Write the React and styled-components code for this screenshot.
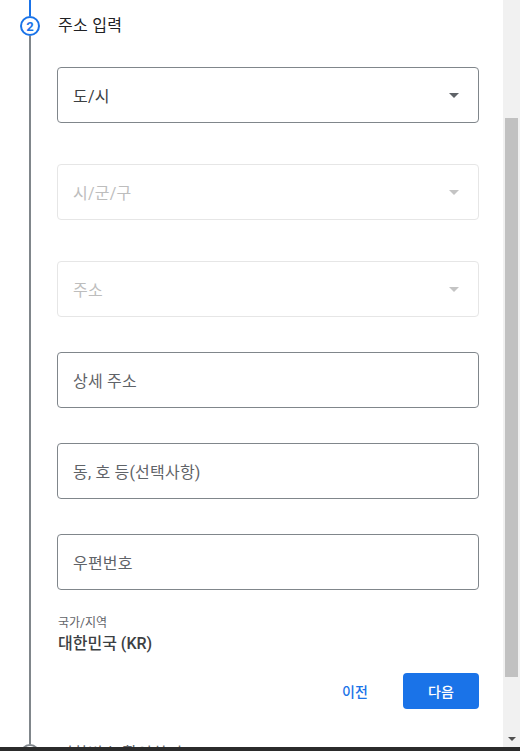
import React from "react";
import styled, { createGlobalStyle } from "styled-components";

const GlobalStyle = createGlobalStyle`
  html, body {
    margin: 0;
    padding: 0;
    background: #ffffff;
  }
  body {
    font-family: Roboto, "Noto Sans CJK KR", sans-serif;
    color: #202124;
  }
`;

const fields = [
  { label: "도/시", select: true, gap: 41 },
  { label: "시/군/구", select: true, disabled: true, gap: 41 },
  { label: "주소", select: true, disabled: true, gap: 35 },
  { label: "상세 주소", gap: 35 },
  { label: "동, 호 등(선택사항)", gap: 35 },
  { label: "우편번호", gap: 0 },
];

const ArrowIcon = ({ disabled }) => (
  <svg width="10" height="5" viewBox="0 0 10 5">
    <path d="M0 0h10L5 5z" fill={disabled ? "#c4c4c4" : "#5f6368"} />
  </svg>
);

export default function App() {
  return (
    <>
      <GlobalStyle />
      <Frame>
        <Window>
          <Content>
            <Step>
              <Rail>
                <Segment $active $height={16} />
                <StepCircle $active>2</StepCircle>
                <Segment $grow />
              </Rail>
              <StepBody>
                <StepTitle>주소 입력</StepTitle>
                <Fields>
                  {fields.map((f) => (
                    <Field
                      key={f.label}
                      $disabled={f.disabled}
                      $gap={f.gap}
                    >
                      <FieldText $disabled={f.disabled} $select={f.select}>
                        {f.label}
                      </FieldText>
                      {f.select && <ArrowIcon disabled={f.disabled} />}
                    </Field>
                  ))}
                </Fields>
                <Country>
                  <CountryLabel>국가/지역</CountryLabel>
                  <CountryValue>대한민국 (KR)</CountryValue>
                </Country>
                <Actions>
                  <TextButton>이전</TextButton>
                  <PrimaryButton>다음</PrimaryButton>
                </Actions>
              </StepBody>
            </Step>
            <Step>
              <Rail>
                <StepCircle>3</StepCircle>
              </Rail>
              <StepBody $next>
                <StepTitle $muted>전화번호 확인하기</StepTitle>
              </StepBody>
            </Step>
          </Content>
          <Scrollbar>
            <Thumb />
            <ScrollArrow>
              <svg width="8" height="4" viewBox="0 0 8 4">
                <path d="M0 0h8L4 4z" fill="#505050" />
              </svg>
            </ScrollArrow>
          </Scrollbar>
        </Window>
        <BottomEdge />
      </Frame>
    </>
  );
}

const Frame = styled.div`
  width: 520px;
  height: 751px;
  display: flex;
  flex-direction: column;
  overflow: hidden;
`;

const Window = styled.div`
  flex: 1;
  min-height: 0;
  display: flex;
  overflow: hidden;
`;

const Content = styled.div`
  flex: 1;
  display: flex;
  flex-direction: column;
  padding-right: 24px;
`;

const Step = styled.div`
  display: flex;
`;

const Rail = styled.div`
  width: 54px;
  padding-left: 3px;
  display: flex;
  flex-direction: column;
  align-items: center;
  flex-shrink: 0;
`;

const Segment = styled.div`
  width: 2px;
  height: ${(p) => (p.$height ? `${p.$height}px` : "auto")};
  flex: ${(p) => (p.$grow ? 1 : "none")};
  background: ${(p) => (p.$active ? "#1a73e8" : "#80868b")};
`;

const StepCircle = styled.div`
  width: 20px;
  height: 20px;
  box-sizing: border-box;
  border-radius: 50%;
  border: 2px solid ${(p) => (p.$active ? "#1a73e8" : "#80868b")};
  color: ${(p) => (p.$active ? "#1a73e8" : "#80868b")};
  font-size: 13px;
  font-weight: 700;
  display: flex;
  align-items: center;
  justify-content: center;
  flex-shrink: 0;
`;

const StepBody = styled.div`
  flex: 1;
  display: flex;
  flex-direction: column;
  padding-top: ${(p) => (p.$next ? 0 : 16)}px;
  padding-bottom: ${(p) => (p.$next ? 0 : 35)}px;
`;

const StepTitle = styled.div`
  font-size: 16px;
  line-height: 20px;
  padding-left: 1px;
  letter-spacing: 0.3px;
  color: ${(p) => (p.$muted ? "#5f6368" : "#202124")};
`;

const Fields = styled.div`
  display: flex;
  flex-direction: column;
  margin-top: 31px;
`;

const Field = styled.div`
  height: 56px;
  box-sizing: border-box;
  border: 1px solid ${(p) => (p.$disabled ? "#e6e6e6" : "#80868b")};
  border-radius: 4px;
  margin-bottom: ${(p) => p.$gap}px;
  display: flex;
  align-items: center;
  justify-content: space-between;
  padding: 0 19px 0 15px;
`;

const FieldText = styled.span`
  font-size: 16px;
  letter-spacing: 0.2px;
  color: ${(p) =>
    p.$disabled ? "#bdbdbd" : p.$select ? "#3c4043" : "#5f6368"};
`;

const Country = styled.div`
  display: flex;
  flex-direction: column;
  margin-top: 25px;
  padding-left: 1px;
`;

const CountryLabel = styled.div`
  font-size: 12px;
  line-height: 16px;
  color: #5f6368;
`;

const CountryValue = styled.div`
  font-size: 16px;
  line-height: 22px;
  font-weight: 500;
  color: #3c4043;
  margin-top: 2px;
`;

const Actions = styled.div`
  display: flex;
  justify-content: flex-end;
  align-items: center;
  gap: 16px;
  margin-top: 18px;
`;

const TextButton = styled.button`
  height: 36px;
  min-width: 64px;
  padding: 0 8px;
  border: none;
  background: transparent;
  color: #1a73e8;
  font-family: inherit;
  font-size: 14px;
  font-weight: 500;
  border-radius: 4px;
  cursor: pointer;
`;

const PrimaryButton = styled(TextButton)`
  width: 76px;
  background: #1a73e8;
  color: #ffffff;
`;

const Scrollbar = styled.div`
  width: 17px;
  flex-shrink: 0;
  background: #f1f1f1;
  display: flex;
  flex-direction: column;
  align-items: center;
  padding-top: 118px;
  box-sizing: border-box;
`;

const Thumb = styled.div`
  width: 13px;
  height: 559px;
  background: #c1c1c1;
`;

const ScrollArrow = styled.div`
  margin-top: auto;
  height: 17px;
  display: flex;
  align-items: center;
  justify-content: center;
`;

const BottomEdge = styled.div`
  height: 4px;
  background: #2b2b2b;
  flex-shrink: 0;
`;
